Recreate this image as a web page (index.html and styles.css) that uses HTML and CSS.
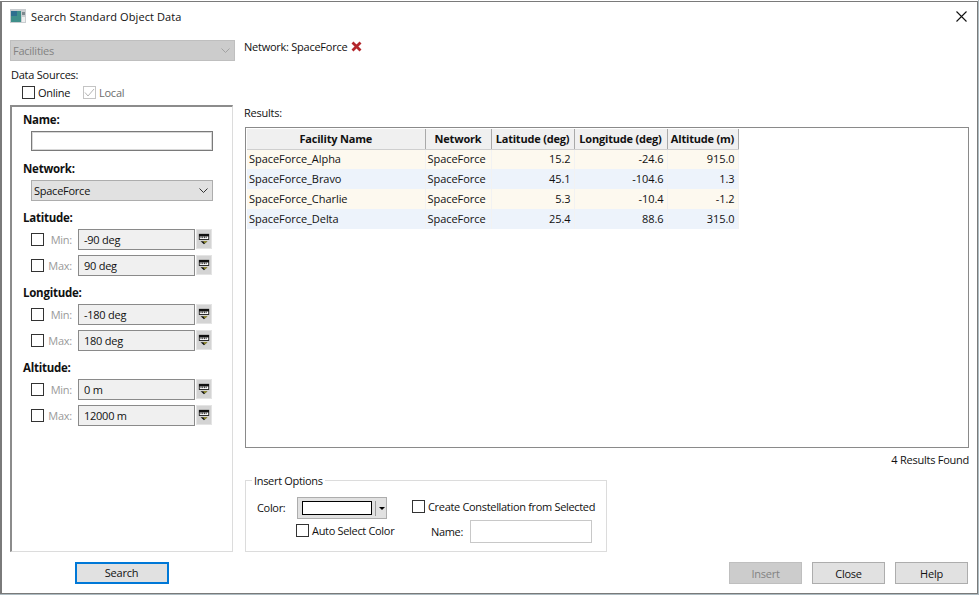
FILE: index.html
```html
<!DOCTYPE html>
<html lang="en">
<head>
    <meta charset="UTF-8">
    <title>Search Standard Object Data</title>
    <link rel="stylesheet" href="styles.css">
</head>
<body>
    <div class="window">
        <div class="titlebar">
            <svg class="app-icon" width="16" height="14" viewBox="0 0 16 14">
                <rect width="16" height="14" fill="#c9cdd0"/>
                <rect x="1" y="2" width="10" height="11" fill="#3f8f8a"/>
                <rect x="1" y="2" width="6" height="5" fill="#2f6f8f"/>
                <rect x="12" y="3" width="3" height="3" fill="#7f8a90"/>
                <rect x="12" y="8" width="3" height="5" fill="#eef0f0"/>
            </svg>
            <span class="title">Search Standard Object Data</span>
            <svg class="close-x" width="11" height="11" viewBox="0 0 11 11">
                <path d="M0.5 0.5L10.5 10.5M10.5 0.5L0.5 10.5" stroke="#111" stroke-width="1.1" fill="none"/>
            </svg>
        </div>

        <div class="content">
            <div class="left">
                <div class="combo combo-disabled">
                    <span>Facilities</span>
                    <svg width="9" height="5" viewBox="0 0 9 5"><path d="M0.5 0.5L4.5 4.5L8.5 0.5" stroke="#a2a2a2" fill="none"/></svg>
                </div>
                <div class="sources-label">Data Sources:</div>
                <div class="sources">
                    <label class="check-row online"><span class="check"></span>Online</label>
                    <label class="check-row muted">
                        <span class="check check-disabled">
                            <svg width="11" height="9" viewBox="0 0 11 9"><path d="M1 4.5L4 8L10 1" stroke="#b5b5b5" fill="none"/></svg>
                        </span>Local
                    </label>
                </div>

                <div class="filters">
                    <div class="heading">Name:</div>
                    <div class="name-box"></div>

                    <div class="heading heading-network">Network:</div>
                    <div class="combo combo-network">
                        <span>SpaceForce</span>
                        <svg width="9" height="5" viewBox="0 0 9 5"><path d="M0.5 0.5L4.5 4.5L8.5 0.5" stroke="#333" fill="none"/></svg>
                    </div>

                    <div class="heading heading-group">Latitude:</div>
                    <div class="range-row">
                        <span class="check"></span><span class="range-label">Min:</span>
                        <div class="value-box">-90 deg</div>
                        <button class="unit-btn"><svg width="12" height="12" viewBox="0 0 14 14"><use href="#ruler"/></svg></button>
                    </div>
                    <div class="range-row">
                        <span class="check"></span><span class="range-label">Max:</span>
                        <div class="value-box">90 deg</div>
                        <button class="unit-btn"><svg width="12" height="12" viewBox="0 0 14 14"><use href="#ruler"/></svg></button>
                    </div>

                    <div class="heading heading-group">Longitude:</div>
                    <div class="range-row">
                        <span class="check"></span><span class="range-label">Min:</span>
                        <div class="value-box">-180 deg</div>
                        <button class="unit-btn"><svg width="12" height="12" viewBox="0 0 14 14"><use href="#ruler"/></svg></button>
                    </div>
                    <div class="range-row">
                        <span class="check"></span><span class="range-label">Max:</span>
                        <div class="value-box">180 deg</div>
                        <button class="unit-btn"><svg width="12" height="12" viewBox="0 0 14 14"><use href="#ruler"/></svg></button>
                    </div>

                    <div class="heading heading-group">Altitude:</div>
                    <div class="range-row">
                        <span class="check"></span><span class="range-label">Min:</span>
                        <div class="value-box">0 m</div>
                        <button class="unit-btn"><svg width="12" height="12" viewBox="0 0 14 14"><use href="#ruler"/></svg></button>
                    </div>
                    <div class="range-row">
                        <span class="check"></span><span class="range-label">Max:</span>
                        <div class="value-box">12000 m</div>
                        <button class="unit-btn"><svg width="12" height="12" viewBox="0 0 14 14"><use href="#ruler"/></svg></button>
                    </div>
                </div>

                <div class="search-row">
                    <button class="btn btn-search">Search</button>
                </div>
            </div>

            <div class="right">
                <div class="network-filter">
                    <span>Network: SpaceForce</span>
                    <svg width="11" height="11" viewBox="0 0 11 11"><path d="M1.5 1.5L9.5 9.5M9.5 1.5L1.5 9.5" stroke="#b3262b" stroke-width="2.8" fill="none"/></svg>
                </div>
                <div class="results-label">Results:</div>

                <div class="table-box">
                    <table class="results">
                        <thead>
                            <tr>
                                <th class="col-name">Facility Name</th>
                                <th class="col-net">Network</th>
                                <th class="col-lat">Latitude (deg)</th>
                                <th class="col-lon">Longitude (deg)</th>
                                <th class="col-alt">Altitude (m)</th>
                            </tr>
                        </thead>
                        <tbody>
                            <tr class="odd"><td>SpaceForce_Alpha</td><td>SpaceForce</td><td class="num">15.2</td><td class="num">-24.6</td><td class="num">915.0</td></tr>
                            <tr class="even"><td>SpaceForce_Bravo</td><td>SpaceForce</td><td class="num">45.1</td><td class="num">-104.6</td><td class="num">1.3</td></tr>
                            <tr class="odd"><td>SpaceForce_Charlie</td><td>SpaceForce</td><td class="num">5.3</td><td class="num">-10.4</td><td class="num">-1.2</td></tr>
                            <tr class="even"><td>SpaceForce_Delta</td><td>SpaceForce</td><td class="num">25.4</td><td class="num">88.6</td><td class="num">315.0</td></tr>
                        </tbody>
                    </table>
                </div>
                <div class="found">4 Results Found</div>

                <div class="bottom">
                    <fieldset class="insert">
                        <legend>Insert Options</legend>
                        <div class="insert-left">
                            <div class="color-row">
                                <span class="color-label">Color:</span>
                                <div class="color-btn">
                                    <span class="swatch"></span>
                                    <span class="color-sep"></span>
                                    <span class="color-arrow"></span>
                                </div>
                            </div>
                            <label class="check-row auto"><span class="check"></span>Auto Select Color</label>
                        </div>
                        <div class="insert-right">
                            <label class="check-row"><span class="check"></span>Create Constellation from Selected</label>
                            <div class="const-row">
                                <span>Name:</span>
                                <div class="const-name"></div>
                            </div>
                        </div>
                    </fieldset>
                    <div class="actions">
                        <button class="btn btn-disabled">Insert</button>
                        <button class="btn">Close</button>
                        <button class="btn">Help</button>
                    </div>
                </div>
            </div>
        </div>
    </div>

    <svg class="defs" width="0" height="0">
        <symbol id="ruler" viewBox="0 0 14 14">
            <rect x="1" y="1" width="12" height="7" fill="#111"/>
            <rect x="2" y="4" width="10" height="3" fill="#fff"/>
            <path d="M3.5 4V6M5.5 4V6M7.5 4V6M9.5 4V6" stroke="#111" fill="none"/>
            <path d="M3 9.5H11L7 13Z" fill="#111"/>
            <path d="M6 9.5H11L8 12Z" fill="#a8a030"/>
        </symbol>
    </svg>
</body>
</html>
```

FILE: styles.css
```css
html, body {
    margin: 0;
    padding: 0;
}
body {
    width: 979px;
    height: 595px;
    overflow: hidden;
    padding-top: 1px;
    box-sizing: border-box;
    background: #aebcc2;
    font-family: "Open Sans", "Noto Sans", sans-serif;
    font-size: 11px;
    letter-spacing: -0.25px;
    color: #111;
}
.window {
    box-sizing: border-box;
    width: 978px;
    height: 593px;
    background: #fff;
    border: 1px solid #7a7a7a;
    border-left-width: 2px;
    box-shadow: 0 -1px 0 #fff;
    display: flex;
    flex-direction: column;
}
.titlebar {
    box-sizing: border-box;
    height: 30px;
    flex: none;
    display: flex;
    align-items: center;
    padding: 0 10px 2px 8px;
}
.app-icon {
    margin-right: 5px;
}
.title {
    flex: 1;
    letter-spacing: 0.1px;
}
.content {
    flex: 1;
    display: flex;
    min-height: 0;
}

/* left column */
.left {
    width: 225px;
    margin-left: 8px;
    display: flex;
    flex-direction: column;
    padding-top: 8px;
}
.combo {
    box-sizing: border-box;
    display: flex;
    align-items: center;
    justify-content: space-between;
    background: #e1e1e1;
    border: 1px solid #adadad;
    padding: 0 4px 0 2px;
}
.combo-disabled {
    height: 21px;
    background: #cccccc;
    border-color: #bfbfbf;
    color: #838383;
}
.sources-label {
    margin: 6px 0 0 1px;
    height: 16px;
    line-height: 16px;
}
.sources {
    display: flex;
    margin: 2px 0 0 12px;
    height: 14px;
}
.check-row {
    display: flex;
    align-items: center;
    gap: 3px;
    white-space: nowrap;
}
.online {
    width: 61px;
}
.muted {
    color: #6d6d6d;
}
.check {
    box-sizing: border-box;
    flex: none;
    width: 13px;
    height: 13px;
    background: #fff;
    border: 1px solid #333;
    display: flex;
    align-items: center;
    justify-content: center;
}
.check-disabled {
    border-color: #c4c4c4;
}
.filters {
    flex: 1;
    box-sizing: border-box;
    margin: 6px 2px 0 0;
    border: 1px solid #dcdcdc;
    border-left: 2px solid #8c8c8c;
    border-top: 2px solid #8c8c8c;
    padding: 4px 0 0 11px;
}
.heading {
    font-weight: 700;
    font-size: 11.5px;
    height: 17px;
    line-height: 17px;
}
.name-box {
    box-sizing: border-box;
    width: 182px;
    height: 20px;
    margin: 3px 0 0 8px;
    background: #fff;
    border: 1px solid #7a7a7a;
    box-shadow: inset 0 0 0 1px #d8d8d8;
}
.heading-network {
    margin-top: 9px;
}
.combo-network {
    width: 182px;
    height: 21px;
    margin: 3px 0 0 8px;
}
.heading-group {
    margin-top: 8px;
}
.range-row {
    display: flex;
    align-items: center;
    height: 22px;
    margin-top: 4px;
}
.heading + .range-row {
    margin-top: 2px;
}
.range-row .check {
    margin-left: 8px;
}
.range-label {
    width: 28px;
    margin-right: 6px;
    text-align: right;
    color: #9a9a9a;
}
.value-box {
    box-sizing: border-box;
    width: 117px;
    height: 21px;
    line-height: 19px;
    background: #f0f0f0;
    border: 1px solid #8a8a8a;
    padding-left: 5px;
}
.unit-btn {
    box-sizing: border-box;
    width: 16px;
    height: 20px;
    margin-left: 1px;
    padding: 0;
    background: #d4d4d4;
    border: 1px solid #e4e4e4;
    display: flex;
    align-items: center;
    justify-content: center;
}
.search-row {
    height: 41px;
    flex: none;
    display: flex;
    justify-content: center;
    align-items: center;
    padding-right: 2px;
}
.btn {
    box-sizing: border-box;
    width: 73px;
    height: 22px;
    padding: 0;
    background: #e1e1e1;
    border: 1px solid #adadad;
    font: inherit;
    letter-spacing: inherit;
    color: #111;
}
.btn-search {
    width: 94px;
    border: 2px solid #0078d7;
}
.btn-disabled {
    background: #cccccc;
    border-color: #bfbfbf;
    color: #838383;
}

/* right column */
.right {
    flex: 1;
    min-width: 0;
    margin-left: 9px;
    padding-right: 8px;
    display: flex;
    flex-direction: column;
}
.network-filter {
    display: flex;
    align-items: center;
    gap: 4px;
    height: 14px;
    margin-top: 7px;
}
.results-label {
    margin-top: 52px;
    height: 16px;
    line-height: 16px;
}
.table-box {
    box-sizing: border-box;
    height: 321px;
    margin: 6px 0 0 1px;
    border: 1px solid #8a8a8a;
    padding: 1px;
    background: #fff;
}
.results {
    border-collapse: collapse;
    table-layout: fixed;
    width: 491px;
    letter-spacing: -0.05px;
}
.results th {
    box-sizing: border-box;
    height: 20px;
    padding: 0;
    background: #f0f0f0;
    border-right: 1px solid #a9a9a9;
    border-bottom: 1px solid #cfcfcf;
    font-weight: 700;
    letter-spacing: -0.2px;
    text-align: center;
}
.col-name { width: 178px; }
.col-net { width: 66px; }
.col-lat { width: 83px; }
.col-lon { width: 93px; }
.col-alt { width: 71px; }
.results td {
    box-sizing: border-box;
    height: 20px;
    padding: 0 3px 2px 2px;
    border-right: 1px solid #f2f2f2;
    white-space: nowrap;
}
.results .num {
    text-align: right;
}
.odd td {
    background: #fdf9ef;
}
.even td {
    background: #edf3fb;
}
.found {
    height: 22px;
    line-height: 24px;
    text-align: right;
}
.bottom {
    flex: 1;
    display: flex;
    align-items: flex-end;
    justify-content: space-between;
    padding-bottom: 9px;
}
.insert {
    box-sizing: border-box;
    width: 362px;
    height: 79px;
    margin: 3px 0 0 1px;
    padding: 9px 11px 0 11px;
    border: 1px solid #dcdcdc;
    display: flex;
    gap: 16px;
    align-self: flex-start;
    letter-spacing: -0.32px;
}
.insert legend {
    padding: 0 2px;
    margin-left: -5px;
}
.insert-left {
    width: 139px;
    flex: none;
}
.insert-right {
    flex: none;
    width: 180px;
    padding-top: 2px;
}
.color-row {
    display: flex;
    align-items: center;
    gap: 11px;
}
.color-label {
    width: 29px;
    padding-bottom: 2px;
}
.color-btn {
    box-sizing: border-box;
    width: 90px;
    height: 22px;
    background: #e1e1e1;
    border: 1px solid #adadad;
    display: flex;
    align-items: center;
    padding-left: 4px;
}
.swatch {
    box-sizing: border-box;
    width: 70px;
    height: 14px;
    background: #fff;
    border: 1px solid #000;
}
.color-sep {
    width: 1px;
    height: 15px;
    margin: 0 3px;
    background: #9a9a9a;
}
.color-arrow {
    border: 3px solid transparent;
    border-top: 3px solid #000;
    border-bottom: 0;
}
.auto {
    margin: 4px 0 0 39px;
}
.const-row {
    display: flex;
    align-items: center;
    justify-content: flex-end;
    gap: 7px;
    margin-top: 6px;
}
.const-name {
    box-sizing: border-box;
    width: 122px;
    height: 23px;
    border: 1px solid #c8c8c8;
    background: #fff;
}
.actions {
    display: flex;
    gap: 10px;
    margin-right: 1px;
}
.defs {
    position: absolute;
}
```
